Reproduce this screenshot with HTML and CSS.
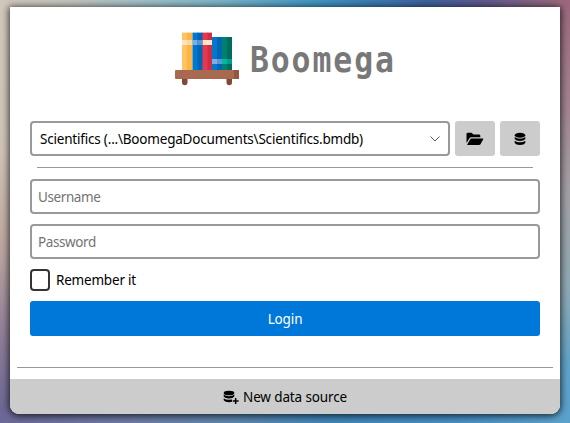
FILE: index.html
```html
<!DOCTYPE html>
<html lang="en">
<head>
<meta charset="utf-8">
<title>Boomega</title>
<link rel="stylesheet" href="styles.css">
</head>
<body>
<main class="window">
  <header class="brand">
    <svg class="logo" width="64" height="54" viewBox="0 0 64 54">
      <path fill="#ffc366" d="M7 .6h5.500v38H7z"/><path fill="#ffb440" d="M12 .6h5.500v38H12z"/>
      <path fill="#0078cf" d="M17.500 .6h5.500v38h-5.500z"/><path fill="#0066b3" d="M22.500 .6h5.500v38h-5.500z"/>
      <path fill="#e63950" d="M27.500 .6h5.500v38h-5.500z"/><path fill="#cc2e43" d="M32.500 .6H37v38h-4.500z"/>
      <path fill="#0078cf" d="M37 5h5.500v33H37z"/><path fill="#0066b3" d="M42 5h5.500v33H42z"/>
      <path fill="#00806f" d="M47 5h5.500v33H47z"/><path fill="#006b5e" d="M52 5h5v33h-5z"/>
      <path fill="#ffe4c2" d="M7 8h5v5H7zM27.500 8H37v5h-9.500z"/><path fill="#ffd89f" d="M12 8h5.500v5H12z"/>
      <path fill="#7baee3" d="M17.500 8h5v5h-5zM37 27h5v5h-5z"/><path fill="#5c94d5" d="M22.500 8h5v5h-5zM42 27h5v5h-5z"/>
      <path fill="#00b99f" d="M47 27h5v5h-5z"/><path fill="#009f88" d="M52 27h5v5h-5z"/>
      <path fill="#7d4b37" d="M7 46h5.500v4.500a2.750 2.750 0 0 1-5.500 0zM51.500 46H57v4.500a2.750 2.750 0 0 1-5.500 0z"/>
      <rect y="38" width="64" height="9" rx="1" fill="#a96850"/><path fill="#935741" d="M59 38h4q1 0 1 1v7q0 1-1 1h-4z"/>
    </svg>
    <h1 class="title">Boomega</h1>
  </header>
  <form class="form">
    <div class="source">
      <div class="select"><span class="path">Scientifics (...\BoomegaDocuments\Scientifics.bmdb)</span>
        <svg width="10" height="6" viewBox="0 0 10 6"><path d="M.5.500 5 5 9.500.500" fill="none" stroke="#444" stroke-width=".9"/></svg>
      </div>
      <button class="tool" type="button" aria-label="Open">
        <svg width="18" height="14" viewBox="0 0 18 14"><path d="M.5 11V2Q.5.700 1.800.700H5.500L7.500 2.500H13Q14.300 2.500 14.300 3.800V5.300H5.300Q4 5.300 3.300 6.400Z"/><path d="M1 13 4.200 7.200Q4.700 6.400 5.500 6.400H16.700Q17.700 6.400 17.200 7.300L14.500 12.200Q14 13 13 13Z"/></svg>
      </button>
      <button class="tool" type="button" aria-label="Data sources">
        <svg width="12" height="14" viewBox="0 0 12 14"><ellipse cx="6" cy="3.200" rx="5.300" ry="2.500"/><path d="M.7 5Q2.500 6.700 6 6.700T11.300 5V7Q10 9 6 9T.7 7ZM.7 8.700Q2.500 10.200 6 10.200T11.300 8.700V10.700Q10 12.900 6 12.900T.7 10.700Z"/></svg>
      </button>
    </div>
    <hr class="rule">
    <input class="field" type="text" placeholder="Username">
    <input class="field" type="password" placeholder="Password">
    <label class="remember"><input class="check" type="checkbox"><span>Remember it</span></label>
    <button class="login" type="button">Login</button>
  </form>
  <hr class="rule rule-bottom">
  <button class="new-source" type="button">
    <svg width="16" height="14" viewBox="0 0 16 14"><ellipse cx="6" cy="3" rx="5.300" ry="2.300"/><path d="M.7 4.600Q2 6.200 6 6.200T11.300 4.600V6.600Q10 8.500 6 8.500T.7 6.600ZM.7 8.200Q2 9.800 6 9.800L9 9.500V11.700L6 12.200Q2 12.200.700 10.200ZM11.900 8h1.500v2.200h2.200v1.500h-2.200v2.200h-1.500v-2.200H9.700v-1.500h2.200z"/></svg>
    <span>New data source</span>
  </button>
</main>
</body>
</html>
```
FILE: styles.css
```css
* { box-sizing: border-box; }
body {
  margin: 0;
  width: 570px;
  height: 423px;
  padding: 7px 10px 9px;
  overflow: hidden;
  font: 13.5px/20px "Noto Sans", "Open Sans", sans-serif;
  letter-spacing: -.2px;
  color: #000;
  background:
    linear-gradient(90deg, #d0c7bd 0, #c3c4bd 70px, #9dbfc7 150px, #7ab5c8 220px, #4398c4 310px, #3b7db5 370px, #3f639f 425px, #5a598f 480px, #9b687d 560px) 0 0 / 100% 8px no-repeat,
    linear-gradient(90deg, #6c6796 0, #6d7ba3 130px, #5f86ac 220px, #3e86b9 330px, #4690c3 460px, #5aa1cc 560px) 0 100% / 100% 12px no-repeat,
    linear-gradient(#d0c7bd 0, #cfc3b7 150px, #bba6a0 250px, #8c7c96 340px, #6c6796 411px) 0 0 / 20px 100% no-repeat,
    linear-gradient(#9b687d 0, #a1828e 100px, #a3a0a5 190px, #8fa9b4 290px, #62a3c8 360px, #5aa1cc 411px) 100% 0 / 20px 100% no-repeat;
}
.window {
  width: 550px;
  height: 407px;
  display: flex;
  flex-direction: column;
  background: #fff;
  border-radius: 0 0 9px 9px;
  box-shadow: 0 1px 7px 1px rgba(0, 0, 0, .75);
}
.brand {
  display: flex;
  justify-content: center;
  gap: 10px;
  height: 114px;
  padding-top: 25px;
}
.logo { flex: none; }
.title {
  margin: 0;
  width: 147px;
  font: bold 35px/56px "DejaVu Sans Mono", monospace;
  letter-spacing: 2.1px;
  text-indent: 1px;
  white-space: nowrap;
  transform: scaleX(.9);
  transform-origin: 0 0;
  color: #787878;
}
.form { padding: 0 20px; }
.source { display: flex; gap: 5px; }
.select {
  display: flex;
  align-items: center;
  justify-content: space-between;
  width: 420px;
  height: 35px;
  padding: 0 8px;
  border: 2px solid #999;
  border-radius: 4px;
}
.path { white-space: nowrap; }
button { border: 0; padding: 0; font: inherit; letter-spacing: -.13px; }
.tool {
  display: flex;
  align-items: center;
  justify-content: center;
  width: 40px;
  height: 35px;
  border-radius: 3px;
  background: #ccc;
}
.rule {
  height: 1px;
  margin: 11px 7px;
  border: 0;
  background: #999;
}
.field {
  display: block;
  width: 100%;
  height: 35px;
  margin-bottom: 10px;
  padding: 0 6px;
  border: 2px solid #999;
  border-radius: 4px;
  font: inherit;
  letter-spacing: -.4px;
}
.field::placeholder { color: #737373; }
.remember {
  display: flex;
  align-items: center;
  gap: 6px;
  height: 22px;
}
.check {
  appearance: none;
  width: 20px;
  height: 22px;
  margin: 0;
  border: 2px solid #333;
  border-radius: 4px;
}
.login {
  display: block;
  width: 100%;
  height: 35px;
  margin-top: 10px;
  border-radius: 3px;
  background: #0078d9;
  color: #fff;
}
.rule-bottom { margin: auto 7px 11px; }
.new-source {
  display: flex;
  align-items: center;
  justify-content: center;
  gap: 4px;
  height: 35px;
  background: #ccc;
  border-radius: 0 0 9px 9px;
}
```
